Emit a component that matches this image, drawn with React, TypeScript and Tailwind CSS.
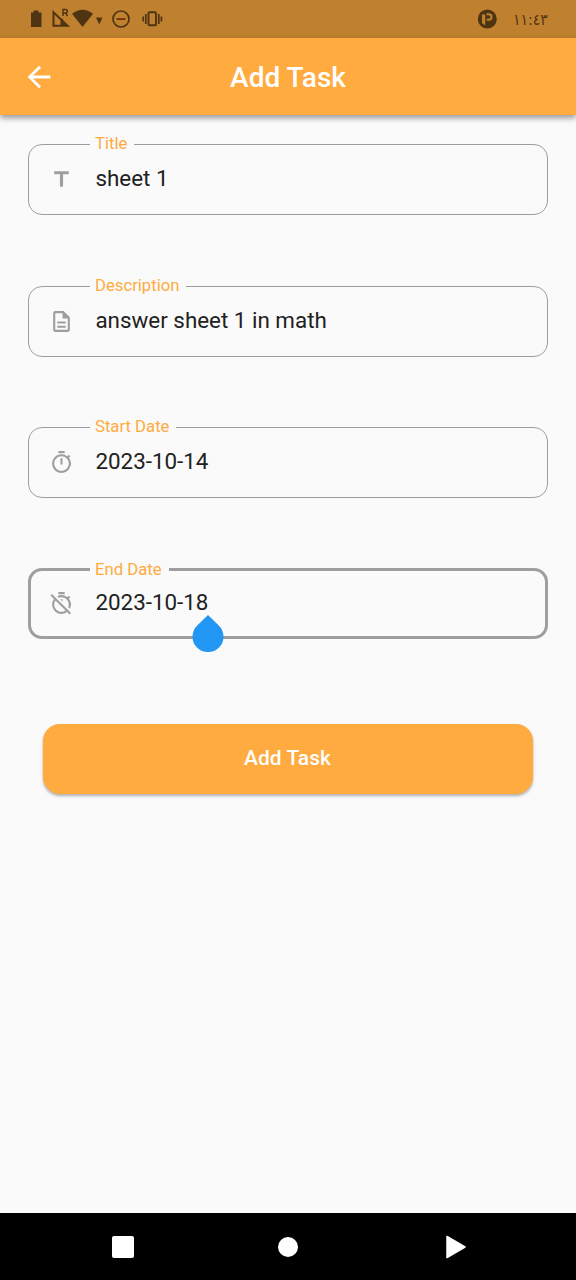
import type { ReactNode } from "react";
import {
  MdArrowBack,
  MdOutlineDescription,
  MdOutlineTimer,
  MdOutlineTimerOff,
  MdTitle,
} from "react-icons/md";

function StatusBar() {
  return (
    <div className="flex h-[38px] shrink-0 items-center justify-between bg-[#bf812f] text-[#4f3412]">
      <svg width="180" height="38" viewBox="0 0 180 38" fill="currentColor">
        <path d="M31 12.5h2.5V10.5h5v2H41.5V27H31z" />
        <path
          fillRule="evenodd"
          d="M52.5 10v16.7H70L63 20v-1.2h-1.3zM54.5 14.5l6 6v4.2h-6z"
        />
        <path
          d="M63 16V9.6h2.6a1.7 1.7 0 0 1 0 3.5H63m2.6 0l2 2.9"
          fill="none"
          stroke="currentColor"
          strokeWidth="1.5"
        />
        <path d="M72 13.7Q82.5 6 93 13.7L82.5 27z" />
        <path d="M96 17.5h6.5L99.3 24.5z" />
        <circle cx="121" cy="19" r="8" fill="none" stroke="currentColor" strokeWidth="1.7" />
        <path d="M116.5 18.2h9v1.7h-9z" fill="#6d2c08" />
        <g fill="none" stroke="currentColor" strokeWidth="1.7">
          <rect x="148.5" y="12.3" width="7.500" height="13" rx="1" strokeWidth="1.9" />
          <path d="M145.8 14v10M158.8 14v10M143.2 16.5v5M161.4 16.5v5" />
        </g>
      </svg>
      <div className="flex items-center pr-7">
        <svg width="20" height="20" viewBox="0 0 20 20">
          <circle cx="10.3" cy="10" r="9.5" fill="currentColor" />
          <path d="M5 5.5h3.2v10.8a8 8 0 0 1-3.200-2.500z" fill="#bf812f" />
          <path
            d="M9.600 5.300h2.200a2.700 2.700 0 0 1 0 5.400h-2.200"
            fill="none"
            stroke="#bf812f"
            strokeWidth="2"
          />
        </svg>
        <span className="ml-4 w-[35px] origin-center scale-y-[1.15] whitespace-nowrap text-[14px] leading-none [font-family:'DejaVu_Sans',sans-serif]">
          ١١:٤٣
        </span>
      </div>
    </div>
  );
}

type FieldProps = {
  label: string;
  value: string;
  icon: ReactNode;
  focused?: boolean;
};

function Field({ label, value, icon, focused = false }: FieldProps) {
  return (
    <fieldset
      className={
        focused
          ? "h-[80px] rounded-[14px] border-[3px] border-[#9e9e9e] pl-[16px]"
          : "h-[81px] rounded-[14px] border border-[#9e9e9e] pl-[18px]"
      }
    >
      <legend
        className={
          focused
            ? "ml-[43px] h-5 pl-[5px] pr-[7px] pt-px text-[16.7px] leading-5 text-[#ffab40]"
            : "ml-[43px] h-5 pl-[5px] pr-[7px] text-[16.7px] leading-5 text-[#ffab40]"
        }
      >
        {label}
      </legend>
      <div className={focused ? "flex h-[46px] items-center" : "flex h-[47px] items-center"}>
        <span className="mt-[3px] flex w-7 justify-center text-[#9e9e9e]">{icon}</span>
        <span className="relative ml-[20.4px] text-[22.4px] leading-7 text-[#212121]">
          {value}
          {focused && (
            <svg
              className="absolute -right-4 top-[27px]"
              width="32"
              height="38"
              viewBox="0 0 32 38"
            >
              <path
                d="M16 0L26.8 10.5A15.5 15.5 0 1 1 5.2 10.5z"
                fill="#2196f3"
              />
            </svg>
          )}
        </span>
      </div>
    </fieldset>
  );
}

export default function App() {
  return (
    <div className="flex h-[1280px] w-[576px] flex-col overflow-hidden bg-[#fafafa] [font-family:Roboto,sans-serif]">
      <StatusBar />
      <header className="grid h-[77px] shrink-0 grid-cols-[80px_1fr_80px] items-center bg-[#ffab40] text-white shadow-[0_3px_6px_rgba(0,0,0,0.4)]">
        <MdArrowBack className="ml-[22px]" size={34} />
        <h1 className="pt-[2px] text-center text-[28px] font-medium leading-8">Add Task</h1>
      </header>
      <main className="flex grow flex-col px-7 pt-[19px]">
        <div className="flex flex-col">
          <Field label="Title" value="sheet 1" icon={<MdTitle size={25} />} />
          <div className="mt-[61px]">
            <Field
              label="Description"
              value="answer sheet 1 in math"
              icon={<MdOutlineDescription size={25} />}
            />
          </div>
          <div className="mt-[60px]">
            <Field label="Start Date" value="2023-10-14" icon={<MdOutlineTimer size={25} />} />
          </div>
          <div className="mt-[61px]">
            <Field
              label="End Date"
              value="2023-10-18"
              icon={<MdOutlineTimerOff size={25} />}
              focused
            />
          </div>
        </div>
        <button className="mx-[15px] mt-[85px] h-[70px] rounded-[17px] bg-[#ffab40] pr-px text-[21px] font-medium text-white shadow-[0_2px_3px_rgba(0,0,0,0.3)]">
          Add Task
        </button>
      </main>
      <nav className="flex h-[67px] shrink-0 items-center bg-black">
        <span className="ml-28 h-[22px] w-[22px] rounded-[2px] bg-white" />
        <span className="ml-[144px] h-5 w-5 rounded-full bg-white" />
        <svg className="ml-[147px]" width="22" height="24" viewBox="0 0 22 24">
          <path
            d="M2 1.5L20 12L2 22.5z"
            fill="white"
            stroke="white"
            strokeWidth="1.5"
            strokeLinejoin="round"
          />
        </svg>
      </nav>
    </div>
  );
}
